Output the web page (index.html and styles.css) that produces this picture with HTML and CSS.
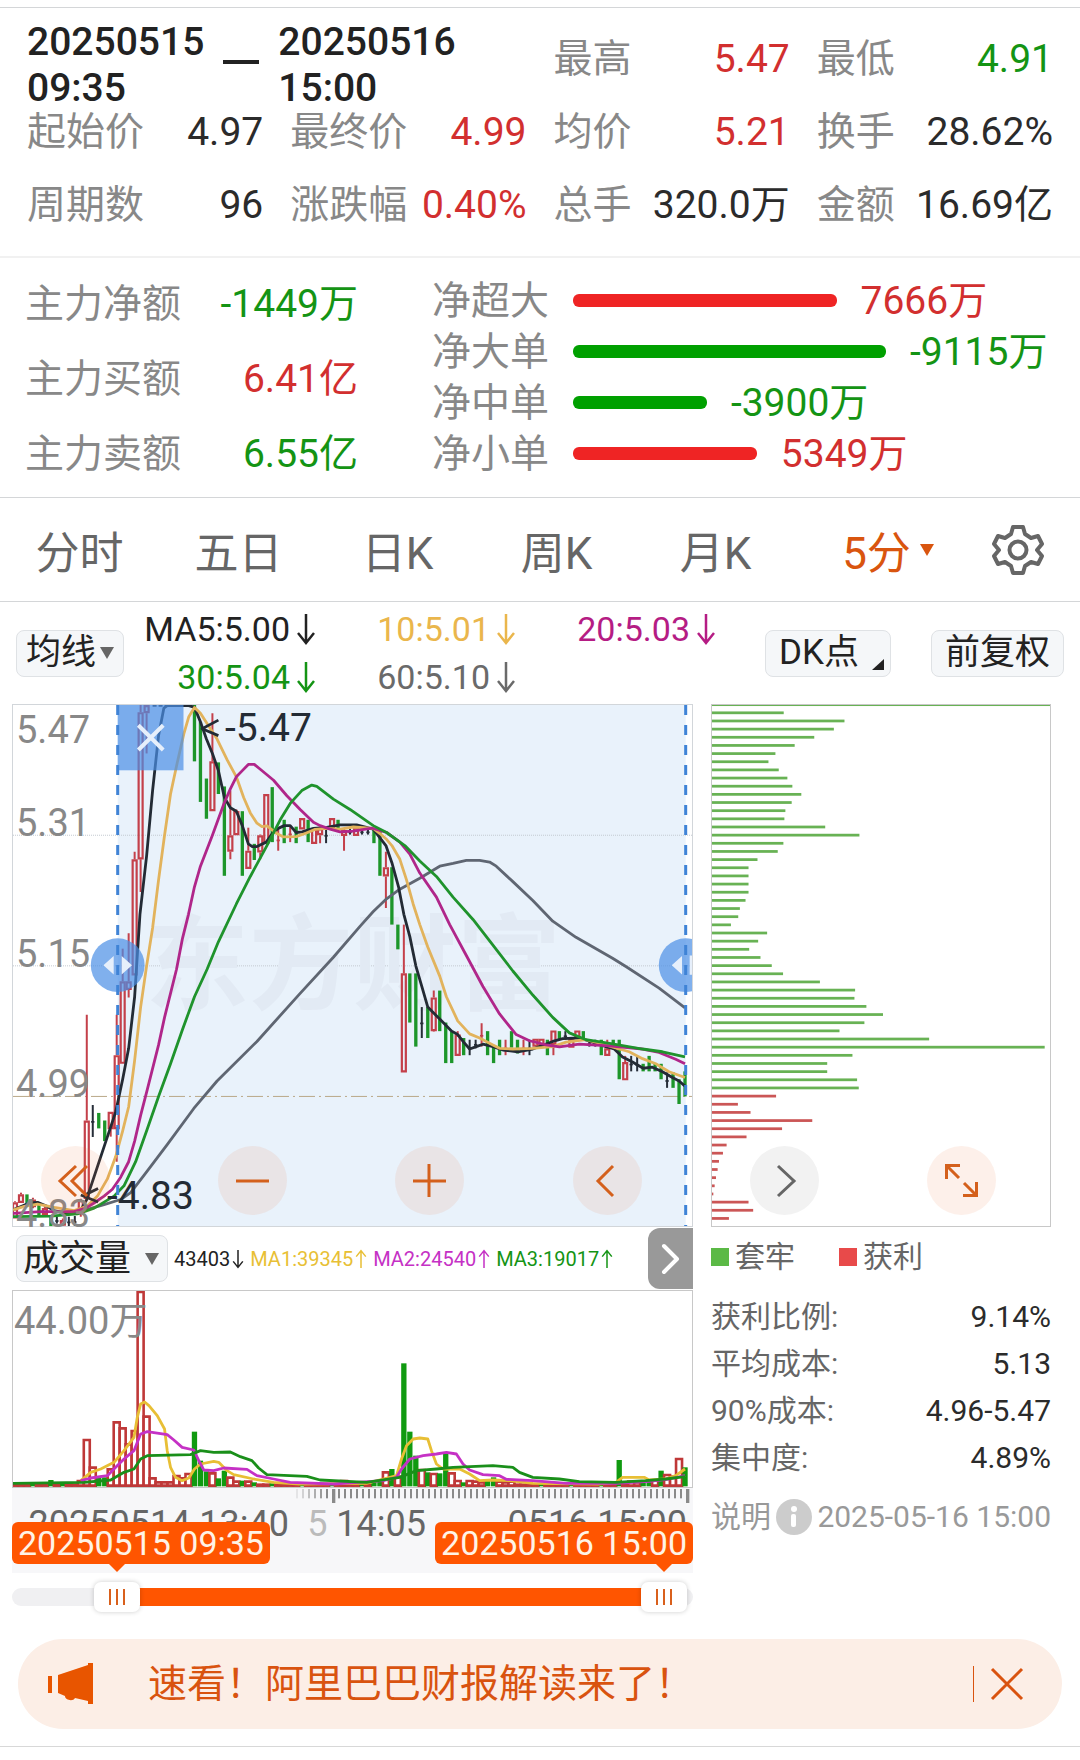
FILE: index.html
```
<!DOCTYPE html>
<html lang="zh-CN">
<head>
    <meta charset="UTF-8">
    <meta name="viewport" content="width=device-width, initial-scale=1.0">
    <title>区间统计</title>
    <link rel="stylesheet" href="styles.css">
</head>
<body>
    <section class="summary">
        <div class="period">
            <span>20250515<br>09:35</span>
            <i class="dash"></i>
            <span>20250516<br>15:00</span>
        </div>
        <div class="cell"><span class="label">最高</span><b class="red">5.47</b></div>
        <div class="cell"><span class="label">最低</span><b class="green">4.91</b></div>
        <div class="cell"><span class="label">起始价</span><b>4.97</b></div>
        <div class="cell"><span class="label">最终价</span><b class="red">4.99</b></div>
        <div class="cell"><span class="label">均价</span><b class="red">5.21</b></div>
        <div class="cell"><span class="label">换手</span><b>28.62%</b></div>
        <div class="cell"><span class="label">周期数</span><b>96</b></div>
        <div class="cell"><span class="label">涨跌幅</span><b class="red">0.40%</b></div>
        <div class="cell"><span class="label">总手</span><b>320.0万</b></div>
        <div class="cell"><span class="label">金额</span><b>16.69亿</b></div>
    </section>

    <section class="funds">
        <div class="main-funds">
            <div class="cell"><span class="label">主力净额</span><b class="green">-1449万</b></div>
            <div class="cell"><span class="label">主力买额</span><b class="red">6.41亿</b></div>
            <div class="cell"><span class="label">主力卖额</span><b class="green">6.55亿</b></div>
        </div>
        <div class="net-funds">
            <div class="net"><span class="label">净超大</span><div class="track"><i class="bar bg-red" style="width:54.9%"></i><b class="red">7666万</b></div></div>
            <div class="net"><span class="label">净大单</span><div class="track"><i class="bar bg-green" style="width:65.2%"></i><b class="green">-9115万</b></div></div>
            <div class="net"><span class="label">净中单</span><div class="track"><i class="bar bg-green" style="width:27.9%"></i><b class="green">-3900万</b></div></div>
            <div class="net"><span class="label">净小单</span><div class="track"><i class="bar bg-red" style="width:38.3%"></i><b class="red">5349万</b></div></div>
        </div>
    </section>

    <nav class="tabs">
        <button>分时</button>
        <button>五日</button>
        <button>日K</button>
        <button>周K</button>
        <button>月K</button>
        <button class="active">5分<i class="tri"></i></button>
        <button class="gear" aria-label="设置">
            <svg width="52" height="52" viewBox="0 0 52 52" fill="none" stroke="#666" stroke-width="4" stroke-linejoin="round">
                <path d="M21 3h10l2 7 6 4 7-2 4 8-5 6 5 6-4 8-7-2-6 4-2 7H21l-2-7-6-4-7 2-4-8 5-6-5-6 4-8 7 2 6-4z"/>
                <circle cx="26" cy="26" r="8.5"/>
            </svg>
        </button>
    </nav>

    <div class="toolbar">
        <button class="btn">均线<i class="tri"></i></button>
        <div class="ma-list">
            <span class="c-black">MA5:5.00<svg class="arrow"><use href="#down"/></svg></span>
            <span class="c-yellow">10:5.01<svg class="arrow"><use href="#down"/></svg></span>
            <span class="c-purple">20:5.03<svg class="arrow"><use href="#down"/></svg></span>
            <span class="c-green">30:5.04<svg class="arrow"><use href="#down"/></svg></span>
            <span class="c-gray">60:5.10<svg class="arrow"><use href="#down"/></svg></span>
        </div>
        <div class="tools">
            <button class="btn dk">DK点<i class="corner"></i></button>
            <button class="btn">前复权</button>
        </div>
    </div>

    <main class="charts">
        <div class="left">
            <div class="kline">
                <svg class="plot" viewBox="36 41 2043 1516" preserveAspectRatio="none">
                    <rect x="351" y="41" width="1709" height="1516" fill="#e9f2fb"/>
                    <g class="grid-line">
                        <path d="M36 420H2079M36 800H2079"/>
                        <path class="base" d="M36 1180H2079"/>
                    </g>
                </svg>
                <span class="watermark">东方财富</span>
                <svg class="plot" viewBox="36 41 2043 1516" preserveAspectRatio="none">
                    <g id="candles"></g>
                    <g class="ma">
                        <polyline stroke="#5f6672" points="255,1510 310,1495 360,1480 390,1460 430,1410 500,1320 580,1215 650,1135 770,1020 900,880 1000,775 1080,685 1120,642 1160,605 1200,577 1260,545 1320,510 1360,502 1400,493 1440,493 1470,498 1490,510 1540,555 1600,610 1660,670 1730,717 1840,778 1880,802 1980,865 2058,922"/>
                        <polyline stroke="#232b35" points="36,1510 60,1500 85,1490 110,1488 135,1498 160,1512 200,1520 240,1510 258,1480 264,1460 345,1225 366,1130 384,1040 402,890 418,650 438,480 456,290 474,130 490,50 500,43 565,43 582,48 600,90 618,140 636,182 654,232 672,310 690,340 708,350 726,392 744,445 756,453 770,453 798,440 816,415 834,400 852,392 870,392 888,412 906,410 940,400 980,397 1020,390 1070,390 1120,402 1158,450 1176,500 1196,570 1212,650 1230,715 1248,800 1266,860 1284,920 1320,955 1356,990 1374,1000 1392,1022 1410,1042 1430,1035 1450,1028 1480,1035 1510,1045 1555,1050 1600,1042 1660,1020 1690,1012 1740,1010 1780,1022 1820,1035 1845,1042 1870,1065 1900,1080 1932,1098 1960,1095 1990,1108 2020,1125 2040,1135 2058,1150"/>
                        <polyline stroke="#e2b35c" points="36,1510 70,1500 110,1493 160,1503 220,1512 258,1500 290,1470 320,1420 345,1355 366,1280 384,1210 402,1075 420,920 438,800 456,690 474,550 492,420 510,300 530,210 550,125 565,75 582,48 600,65 630,110 650,140 680,200 708,250 730,310 750,355 770,385 785,395 800,393 830,415 850,425 888,424 915,415 945,403 980,400 1020,402 1060,396 1120,400 1140,415 1158,430 1176,450 1200,490 1220,550 1240,620 1260,680 1284,745 1320,830 1340,890 1374,960 1410,998 1440,1010 1480,1030 1500,1040 1540,1042 1600,1040 1660,1035 1700,1022 1760,1015 1800,1025 1860,1042 1890,1050 1930,1070 1970,1085 2010,1108 2058,1125"/>
                        <polyline stroke="#b0268a" points="36,1520 120,1515 220,1515 255,1505 280,1490 310,1470 335,1450 360,1415 384,1370 402,1310 420,1235 440,1160 474,1030 492,950 528,810 546,720 564,650 582,570 600,510 636,420 672,325 690,285 708,250 726,232 744,214 762,214 780,228 820,260 860,305 900,345 940,382 960,392 990,402 1020,410 1060,408 1115,399 1160,412 1200,440 1230,475 1260,530 1310,600 1350,680 1400,770 1450,860 1500,940 1550,1000 1590,1018 1640,1030 1680,1036 1740,1028 1830,1033 1930,1042 1980,1052 2030,1072 2058,1085"/>
                        <polyline stroke="#1f932c" points="36,1530 150,1528 230,1522 280,1505 340,1470 370,1440 405,1370 440,1275 474,1180 510,1085 546,985 582,890 620,810 654,730 708,620 750,540 800,450 840,375 872,325 905,290 935,274 950,278 1000,315 1050,345 1120,392 1160,412 1215,450 1260,495 1310,540 1360,600 1420,665 1480,740 1540,815 1600,885 1660,950 1710,995 1760,1015 1840,1027 1930,1042 1990,1050 2058,1065"/>
                        <path stroke="#232b35" d="M654 85L605 110L654 130M292 1448L256 1465M240 1467L292 1487"/>
                    </g>
                    <rect x="351" y="41" width="198" height="190" fill="#4a8fe6" fill-opacity=".7"/>
                    <path class="cross" d="M413 100L488 172M488 100L413 172"/>
                    <ellipse cx="351" cy="798" rx="81" ry="78" fill="#4a8fe6" fill-opacity=".7"/>
                    <ellipse cx="2060" cy="798" rx="81" ry="78" fill="#4a8fe6" fill-opacity=".7"/>
                    <path fill="#e6effb" d="M308 798l31-27v54zM394 798l-31-27v54zM2018 798l31-27v54zM2079 770h-7v56h7z"/>
                    <path class="limit" d="M351 41V1557M2060 41V1557"/>
                </svg>
                <div class="y-axis">
                    <div><span>5.47</span><span>5.31</span></div>
                    <div><span>5.15</span></div>
                    <div><span>4.99</span></div>
                    <div><span>4.83</span></div>
                </div>
                <span class="mark high">-5.47</span>
                <span class="mark low">-4.83</span>
            </div>

            <div class="vol-head">
                <button class="btn">成交量<i class="tri"></i></button>
                <span class="c-black">43403<svg class="arrow"><use href="#down"/></svg></span>
                <span class="v-yellow">MA1:39345<svg class="arrow"><use href="#up"/></svg></span>
                <span class="v-purple">MA2:24540<svg class="arrow"><use href="#up"/></svg></span>
                <span class="c-green">MA3:19017<svg class="arrow"><use href="#up"/></svg></span>
                <button class="next" aria-label="下一个指标">
                    <svg width="20" height="32" viewBox="0 0 20 32"><path d="M3 3l13 13L3 29" fill="none" stroke="#fff" stroke-width="4" stroke-linecap="round" stroke-linejoin="round"/></svg>
                </button>
            </div>

            <div class="volume">
                <svg class="plot" viewBox="36 211 2043 588" preserveAspectRatio="none">
                    <g id="volumes"></g>
                    <g class="ma">
                        <polyline stroke="#e8bf35" points="240,780 270,755 300,745 340,725 370,690 400,650 410,590 420,550 432,544 445,555 470,585 492,625 500,690 510,740 525,770 545,780 565,772 582,745 600,730 640,722 655,725 680,750 700,762 760,775 820,785 900,790 1100,788 1150,775 1190,765 1205,715 1220,675 1240,655 1260,652 1284,655 1295,690 1310,730 1330,745 1380,745 1410,760 1440,780 1480,778 1530,780 1600,788 1800,790 1850,785 1870,770 1935,770 1950,778 2000,775 2030,765 2058,745"/>
                        <polyline stroke="#c531c5" points="240,780 270,772 320,765 345,740 370,715 400,690 420,640 440,633 500,642 520,658 545,680 580,688 595,720 610,748 640,750 670,742 740,746 770,765 820,775 870,785 1000,790 1150,780 1190,770 1205,745 1230,715 1270,705 1310,700 1340,695 1370,700 1390,730 1410,748 1450,762 1500,765 1520,776 1600,780 1700,788 1850,788 1950,782 2010,775 2058,765"/>
                        <polyline stroke="#1a8f1a" points="36,788 250,785 330,778 370,755 400,745 420,715 440,705 570,702 600,690 640,695 690,694 720,708 755,720 775,742 800,762 920,767 960,778 1100,785 1200,770 1250,750 1310,745 1360,740 1480,735 1540,740 1560,755 1600,770 1680,775 1740,783 1850,785 1940,780 2000,775 2058,768"/>
                    </g>
                </svg>
                <span class="vol-max">44.00万</span>
            </div>

            <div class="time-axis">
                <svg class="ticks" viewBox="36 0 2043 45" preserveAspectRatio="none"><g id="ticks"></g></svg>
                <span class="time t1">20250514 13:40</span>
                <span class="time t2"><em>5</em> 14:05</span>
                <span class="time t3">0516 15:00</span>
                <span class="tag from">20250515 09:35</span>
                <span class="tag to">20250516 15:00</span>
            </div>

            <div class="range">
                <div class="range-fill"></div>
                <input type="range" min="0" max="1000" value="129" aria-label="开始时间">
                <input type="range" min="0" max="1000" value="991" aria-label="结束时间">
            </div>
        </div>

        <div class="right">
            <div class="chips">
                <svg class="plot" viewBox="33 41 1018 1516" preserveAspectRatio="none"><g id="chips"></g></svg>
            </div>
            <div class="legend">
                <span><i class="dot lock"></i>套牢</span>
                <span><i class="dot gain"></i>获利</span>
            </div>
            <dl class="stats">
                <div><dt>获利比例:</dt><dd>9.14%</dd></div>
                <div><dt>平均成本:</dt><dd>5.13</dd></div>
                <div><dt>90%成本:</dt><dd>4.96-5.47</dd></div>
                <div><dt>集中度:</dt><dd>4.89%</dd></div>
            </dl>
            <div class="note">
                <span>说明</span>
                <svg width="36" height="36" viewBox="0 0 36 36"><circle cx="18" cy="18" r="18" fill="#ccc"/><circle cx="18" cy="10" r="3" fill="#fff"/><rect x="15" y="15" width="5" height="13" rx="2" fill="#fff"/></svg>
                <span class="when">2025-05-16 15:00</span>
            </div>
        </div>

        <div class="controls">
            <button aria-label="最左"><svg viewBox="0 0 69 69"><path d="M35 20L19 35l16 15M46 20L31 35l15 15"/></svg></button>
            <button aria-label="缩小"><svg viewBox="0 0 69 69"><path d="M18 35h33"/></svg></button>
            <button aria-label="放大"><svg viewBox="0 0 69 69"><path d="M18 35h33M34 18v33"/></svg></button>
            <button aria-label="左移"><svg viewBox="0 0 69 69"><path d="M40 20L25 35l15 15"/></svg></button>
            <button class="gray" aria-label="右移"><svg viewBox="0 0 69 69"><path d="M28 20l16 15-16 15"/></svg></button>
            <button aria-label="全屏"><svg viewBox="0 0 69 69"><path d="M33 19.500H19.500V33M20 20l12 12M37 37l12 12M36 49.500h13.500V36"/></svg></button>
        </div>
    </main>

    <div class="banner">
        <svg width="48" height="42" viewBox="0 0 48 42" fill="#e85500"><path d="M0 13h4v17H0zM10 12L40 2V0h5v41h-5v-3l-13-3c-2 4-10 2-10-2l-7-3z"/></svg>
        <p>速看！阿里巴巴财报解读来了！</p>
        <button aria-label="关闭"><svg width="34" height="34" viewBox="0 0 34 34"><path d="M2 2l30 30M32 2L2 32" stroke="#d9530f" stroke-width="3" fill="none"/></svg></button>
    </div>

    <svg class="defs">
        <symbol id="down" viewBox="0 0 20 32"><path d="M10 1v28M2 20l8 10 8-10"/></symbol>
        <symbol id="up" viewBox="0 0 20 32"><path d="M10 31V3M2 12l8-10 8 10"/></symbol>
    </svg>
    <script src="script.js"></script>
</body>
</html>
```
FILE: styles.css
```
* {
    box-sizing: border-box;
}

body {
    margin: 0;
    padding-top: 7px;
    background: #fff;
    color: #2b2b2b;
    font-family: Roboto, "Noto Sans CJK SC", sans-serif;
    font-size: 39px;
    line-height: 48px;
}

button {
    font-family: inherit;
    color: inherit;
    padding: 0;
    border: 0;
    background: none;
}

b, i, em {
    font-weight: normal;
    font-style: normal;
}

.red { color: #d22f2f; }
.green { color: #149414; }
.bg-red { background: #ef2424; }
.bg-green { background: #00a000; }
.c-black { color: #222; }
.c-yellow { color: #eab64c; }
.c-purple { color: #b51c84; }
.c-green { color: #149414; }
.c-gray { color: #6a6a6a; }
.v-yellow { color: #e8bf35; }
.v-purple { color: #c531c5; }

/* summary */
.summary {
    display: grid;
    grid-template-columns: repeat(4, 1fr);
    grid-template-rows: 82px 64px 82px;
    column-gap: 27px;
    padding: 10px 27px;
    border-top: 1px solid #d4d6d8;
    border-bottom: 2px solid #f1f1f1;
}

.period {
    grid-column: span 2;
    display: flex;
    padding-top: 1px;
    line-height: 46px;
    font-weight: 500;
    color: #222;
}

.dash {
    width: 36px;
    height: 4px;
    margin: 41px 19px 0;
    background: #222;
}

.cell {
    display: flex;
    justify-content: space-between;
    align-items: center;
    white-space: nowrap;
}

.label {
    color: #888;
}

/* funds */
.funds {
    display: flex;
    gap: 74px;
    padding: 8px 27px 6px 25px;
    border-bottom: 1px solid #d4d6d8;
}

.main-funds {
    width: 333px;
}

.main-funds .cell {
    height: 75px;
}

.net-funds {
    flex: 1;
    padding: 9px 0 12px;
}

.net {
    display: flex;
    align-items: center;
    height: 51px;
    white-space: nowrap;
}

.track {
    flex: 1;
    display: flex;
    align-items: center;
    margin-left: 24px;
}

.bar {
    flex: none;
    height: 13px;
    margin-right: 24px;
    border-radius: 6px;
}

/* tabs */
.tabs {
    display: grid;
    grid-template-columns: repeat(5, 159fr) 186fr 99fr;
    height: 104px;
    border-bottom: 1px solid #d4d6d8;
    color: #666;
}

.tabs button {
    display: flex;
    justify-content: center;
    align-items: center;
    font-size: 44px;
}

.tabs .active {
    color: #d9550f;
}

.tabs .gear {
    justify-content: flex-start;
    padding-left: 11px;
}

.tri {
    border: 7px solid transparent;
    border-top: 12px solid;
    border-bottom: 0;
}

.active .tri {
    margin-left: 9px;
}

.btn .tri {
    border-top-color: #666;
}

/* toolbar */
.toolbar {
    display: flex;
    align-items: center;
    height: 102px;
    padding: 0 16px;
}

.btn {
    position: relative;
    display: flex;
    align-items: center;
    height: 47px;
    padding: 0 9px;
    border: 1px solid #dfe2e5;
    border-radius: 8px;
    background: #f5f7f9;
    color: #222;
    font-size: 35px;
    line-height: 44px;
    white-space: nowrap;
}

.toolbar .btn .tri {
    margin-left: 4px;
}

.ma-list {
    display: grid;
    grid-template-columns: 192px 200px 200px;
    font-size: 34px;
    line-height: 48px;
    text-align: right;
}

.arrow {
    width: 20px;
    height: 32px;
    margin-left: 6px;
    vertical-align: -4px;
    fill: none;
    stroke: currentColor;
    stroke-width: 2.5;
}

.tools {
    display: flex;
    gap: 40px;
    margin-left: auto;
}

.tools .btn {
    padding: 0 13px;
}

.tools .dk {
    padding-right: 31px;
}

.corner {
    position: absolute;
    right: 6px;
    bottom: 6px;
    border-left: 12px solid transparent;
    border-bottom: 11px solid #222;
}

/* charts */
.charts {
    position: relative;
    display: grid;
    grid-template-columns: minmax(0, 681fr) minmax(0, 340fr);
    column-gap: 18px;
    padding: 0 29px 0 12px;
}

.plot {
    position: absolute;
    inset: 0;
    width: 100%;
    height: 100%;
}

.plot * {
    vector-effect: non-scaling-stroke;
}

.kline, .chips {
    position: relative;
    height: 523px;
    border: 1px solid #d2d6da;
}

.chips {
    border-color: #c8c8c8;
}

.grid-line path {
    stroke: #c3c9d0;
    stroke-width: 1;
    stroke-dasharray: 1 1;
}

.grid-line .base {
    stroke: #b9a888;
    stroke-dasharray: 16 4 2 4;
}

.ma {
    fill: none;
    stroke-width: 2.8;
    stroke-linejoin: round;
}

.cross {
    stroke: #e6effb;
    stroke-width: 4;
}

.limit {
    stroke: #3f83d6;
    stroke-width: 3;
    stroke-dasharray: 10 10;
}

.watermark {
    position: absolute;
    left: 132px;
    top: 202px;
    font-size: 104px;
    line-height: 120px;
    font-weight: bold;
    color: #e2eaf4;
}

.y-axis {
    position: absolute;
    inset: 0;
    display: grid;
    grid-template-rows: repeat(4, 1fr);
    padding-left: 3px;
    color: #888;
    font-size: 38px;
    line-height: 24px;
}

.y-axis div {
    display: flex;
    flex-direction: column;
    justify-content: flex-end;
}

.y-axis div:first-child {
    justify-content: space-between;
    padding-top: 13px;
}

.mark {
    position: absolute;
    line-height: 40px;
    color: #232b35;
}

.mark.high {
    left: 212px;
    top: 3px;
}

.mark.low {
    left: 94px;
    top: 471px;
}

.controls {
    position: absolute;
    top: 442px;
    left: 41px;
    right: 84px;
    display: flex;
    justify-content: space-between;
}

.controls button {
    width: 69px;
    height: 69px;
    border-radius: 50%;
    background: rgba(240, 110, 50, .1);
}

.controls svg {
    display: block;
    fill: none;
    stroke: #d4601c;
    stroke-width: 3;
}

.controls .gray {
    background: #f2f2f2;
}

.gray svg {
    stroke: #666;
}

/* volume */
.vol-head {
    display: flex;
    align-items: center;
    height: 63px;
    padding-left: 4px;
    font-size: 20px;
    white-space: nowrap;
}

.vol-head .btn {
    height: 47px;
    padding: 0 8px 0 6px;
    margin-right: 6px;
    font-size: 36px;
}

.vol-head .tri {
    margin-left: 14px;
}

.vol-head .arrow {
    width: 12px;
    height: 30px;
    margin: 0 6px 0 2px;
    vertical-align: -8px;
}

.next {
    display: flex;
    justify-content: center;
    align-items: center;
    width: 45px;
    height: 61px;
    margin-left: auto;
    border-radius: 12px 0 0 12px;
    background: #999;
}

.volume {
    position: relative;
    height: 198px;
    border: 1px solid #c8c8c8;
}

.vol-max {
    position: absolute;
    left: 1px;
    top: 10px;
    line-height: 40px;
    font-size: 38px;
    color: #888;
}

.time-axis {
    position: relative;
    height: 85px;
    background: #f7f7f9;
    font-size: 36px;
}

.ticks {
    display: block;
    width: 100%;
    height: 15px;
}

.time {
    position: absolute;
    top: 16px;
    line-height: 40px;
    color: #666;
}

.time em {
    color: #bbb;
}

.t1 { right: 404px; }
.t2 { right: 267px; }
.t3 { right: 6px; }

.tag {
    position: absolute;
    top: 34px;
    padding: 0 6px;
    border-radius: 6px;
    background: #ff5500;
    color: #fff3e6;
    font-size: 34px;
    line-height: 42px;
}

.tag::after {
    content: "";
    position: absolute;
    top: 41px;
    border: 9px solid transparent;
    border-top-color: #ff5500;
    border-bottom: 0;
}

.from { left: 0; }
.to { right: 0; }
.from::after { left: 96px; }
.to::after { right: 20px; }

.range {
    position: relative;
    height: 18px;
    margin-top: 15px;
    border-radius: 9px;
    background: #f0f0f2;
}

.range-fill {
    height: 18px;
    margin: 0 6% 0 16%;
    background: #ff5500;
}

.range input {
    -webkit-appearance: none;
    appearance: none;
    position: absolute;
    left: 0;
    top: -6px;
    width: 100%;
    height: 30px;
    margin: 0;
    background: none;
    pointer-events: none;
}

.range input::-webkit-slider-thumb {
    -webkit-appearance: none;
    width: 46px;
    height: 30px;
    border-radius: 7px;
    background: repeating-linear-gradient(90deg, #d9601c 0 2px, transparent 2px 7px) 15px 7px / 16px 16px no-repeat, #fff;
    box-shadow: 0 0 5px rgba(0, 0, 0, .2);
    pointer-events: auto;
}

/* chips */
.legend {
    display: flex;
    gap: 44px;
    height: 60px;
    align-items: center;
    font-size: 30px;
    color: #666;
}

.legend span {
    display: flex;
    align-items: center;
    gap: 6px;
}

.dot {
    width: 18px;
    height: 18px;
}

.lock { background: #5bb946; }
.gain { background: #e84a4a; }

.stats {
    margin: 6px 0 0;
    font-size: 30px;
    line-height: 47px;
}

.stats div {
    display: flex;
    justify-content: space-between;
}

.stats dt {
    color: #666;
}

.stats dd {
    margin: 0;
}

.note {
    display: flex;
    align-items: center;
    justify-content: space-between;
    height: 72px;
    font-size: 30px;
    color: #999;
    white-space: nowrap;
}

/* banner */
.banner {
    display: flex;
    align-items: center;
    height: 90px;
    margin: 33px 18px 17px;
    padding: 0 38px 0 30px;
    border-radius: 45px;
    background: #fceee6;
    color: #d9530f;
}

.banner p {
    flex: 1;
    margin: 0 0 0 52px;
}

.banner button {
    display: flex;
    height: 36px;
    align-items: center;
    padding-left: 16px;
    border-left: 1px solid #d9530f;
}

.defs {
    display: block;
    width: 100%;
    height: 1px;
    background: #d8d8d8;
    fill: none;
}
```
FILE: script.js
```
const NS = "http://www.w3.org/2000/svg";
const RED = "#c4404a";
const GREEN = "#1d962a";
const BLACK = "#262d38";

function add(parent, name, attrs) {
    const el = document.createElementNS(NS, name);
    for (const key in attrs) {
        el.setAttribute(key, attrs[key]);
    }
    document.getElementById(parent).appendChild(el);
}

// index, type (r up, g down, k flat), high, low, body top, body bottom
const candles = [
    [0,"r",1485,1535,1488,1535],[1,"r",1460,1490,1465,1490],[2,"g",1465,1500],[3,"r",1475,1505,1480,1502],[4,"g",1490,1530],[5,"r",1500,1530,1505,1525],
    [6,"g",1530,1558],[7,"k",1530,1550],[8,"r",1535,1558,1540,1556],[9,"k",1530,1558],[10,"k",1528,1558],[11,"r",1478,1530,1482,1520],
    [12,"r",942,1480,1250,1478],[13,"k",1205,1298],[14,"g",1228,1273],[15,"g",1250,1310],[16,"r",1225,1297,1225,1275],[17,"r",942,1370,1060,1275],
    [18,"r",750,1085,845,1085],[19,"r",705,892,845,870],[20,"r",468,828,490,828],[21,"r",41,585,62,490],[22,"r",41,182,41,65],
    [30,"g",41,205],[31,"g",90,323],[32,"g",255,372],[33,"r",65,350,205,350],[34,"g",208,300],[35,"g",278,538],[36,"r",290,490,420,468],
    [37,"r",345,420,350,420],[38,"g",350,538],[39,"r",398,518,465,518],[40,"g",445,492],[41,"r",418,490,420,470],[42,"r",300,445,300,445],
    [43,"g",280,440],[44,"r",400,465],[45,"g",375,443],[46,"r",390,440],[47,"g",395,443],[48,"r",370,403,370,403],[49,"g",375,440],
    [50,"r",400,445,400,445],[51,"r",395,443,400,420],[52,"k",395,443],[53,"r",370,400,370,400],[54,"g",375,400],[55,"r",400,465,405,422],
    [56,"k",400,418],[57,"r",398,422,398,422],[58,"k",400,418],[59,"k",400,418],[60,"g",400,443],[61,"g",405,538],[62,"r",468,632,513,540],
    [63,"g",513,680],[64,"g",680,752],[65,"r",680,1110,822,1110],[66,"g",822,965],[67,"g",822,1035],[68,"k",920,1010],[69,"g",920,1010],
    [70,"r",872,992,892,990],[71,"g",872,990],[72,"g",965,1083],[73,"g",992,1083],[74,"r",990,1062,1000,1062],[75,"g",1010,1060],
    [76,"k",1015,1060],[77,"k",1015,1040],[78,"r",967,1035],[79,"g",990,1060],[80,"g",1035,1083],[81,"g",1015,1060],[82,"r",1015,1060],
    [83,"g",990,1038],[84,"g",1015,1055],[85,"r",1015,1060],[86,"k",1015,1060],[87,"r",1012,1035,1012,1035],[88,"r",1012,1035,1012,1035],
    [89,"g",1015,1060],[90,"r",988,1060,988,1030],[91,"g",990,1015],[92,"k",990,1015],[93,"r",1012,1038,1012,1038],[94,"r",988,1012,988,1012],
    [95,"g",990,1015],[96,"k",1015,1035],[97,"k",1015,1035],[98,"g",1015,1060],[99,"r",1015,1062,1040,1062],[100,"g",1015,1040],
    [101,"g",1015,1130],[102,"r",1062,1133,1080,1133],[103,"k",1062,1107],[104,"k",1065,1107],[105,"g",1085,1107],[106,"g",1062,1107],
    [107,"g",1085,1107],[108,"g",1085,1130],[109,"k",1110,1155],[110,"g",1110,1155],[111,"g",1130,1202],[112,"g",1107,1180]
];

for (const [i, type, high, low, top, bottom] of candles) {
    const x = 42 + 18 * i;
    if (type == "g") {
        add("candles", "rect", {x: x - 5, y: high, width: 10, height: low - high, fill: GREEN});
        continue;
    }
    const color = type == "r" ? RED : BLACK;
    if (top === undefined) {
        add("candles", "rect", {x: x - 3, y: high, width: 6, height: low - high, fill: color});
        add("candles", "rect", {x: x - 5, y: (high + low) / 2, width: 10, height: 5, fill: color});
        continue;
    }
    add("candles", "path", {d: `M${x} ${high}V${top}M${x} ${bottom}V${low}`, stroke: color, "stroke-width": 2});
    add("candles", "rect", {x: x - 6, y: top + 3, width: 12, height: bottom - top - 6, fill: "none", stroke: color, "stroke-width": 2.2});
}

// limit-up stretch
add("candles", "path", {d: "M456 43H582", stroke: BLACK, "stroke-width": 2, "stroke-dasharray": "4 2"});

const volumes = {
    1:"r785",6:"g778",11:"r778",12:"r655",13:"r738",14:"g770",15:"g770",16:"r743",17:"r602",18:"r620",19:"r668",20:"r628",21:"r211",22:"r585",
    23:"r770",24:"r782",25:"r782",26:"r782",27:"r763",28:"r770",29:"r757",30:"g633",31:"g720",32:"g752",33:"r755",34:"g773",35:"g750",
    36:"r768",37:"r780",38:"g780",39:"r780",40:"g785",55:"r778",60:"g780",61:"g775",62:"r752",63:"g745",64:"r765",65:"g428",66:"g633",
    67:"g705",68:"r745",69:"g755",70:"r757",71:"g758",72:"g700",73:"r755",74:"r778",75:"g785",76:"r778",77:"r780",78:"r782",79:"g780",
    80:"g770",81:"r780",82:"r782",83:"r780",101:"g718",102:"r785",103:"r780",104:"r782",105:"g782",106:"g780",107:"r776",108:"g750",
    109:"r760",110:"r765",111:"r712",112:"g740"
};

for (let i = 0; i < 113; i++) {
    const item = volumes[i] || (i % 5 == 3 ? "g788" : "r789");
    const x = 42 + 18 * i;
    const y = parseInt(item.slice(1));
    if (item[0] == "g") {
        add("volumes", "rect", {x: x - 8, y: y, width: 16, height: 797 - y, fill: "#109a10"});
    } else {
        add("volumes", "rect", {x: x - 9, y: y + 3, width: 18, height: Math.max(792 - y, 2), fill: "#fff", stroke: "#bf3838", "stroke-width": 2.6});
    }
}

for (let i = 47; i < 113; i++) {
    const long = i == 53 || i == 112;
    const opacity = Math.min(1, (i - 46) / 6);
    add("ticks", "rect", {x: 42 + 18 * i, y: 3, width: long ? 10 : 6, height: long ? 42 : 28, fill: "#8a8a8a", opacity: opacity});
}

const trapped = [1051,249,432,400,341,282,224,203,234,260,275,302,273,254,251,374,477,248,231,170,143,143,143,143,134,117,112,90,199,172,145,
    179,213,247,358,464,462,498,548,492,417,687,1035,456,380,380,470,475];
const profit = [226,111,149,335,244,137,77,66,54,50,45,41,37,143,157,84];

trapped.concat(profit).forEach((end, i) => {
    const color = i < trapped.length ? "#68b254" : "#cb5656";
    add("chips", "rect", {x: 33, y: 36 + 23.73 * i, width: end - 33, height: 8, fill: color});
});
```
